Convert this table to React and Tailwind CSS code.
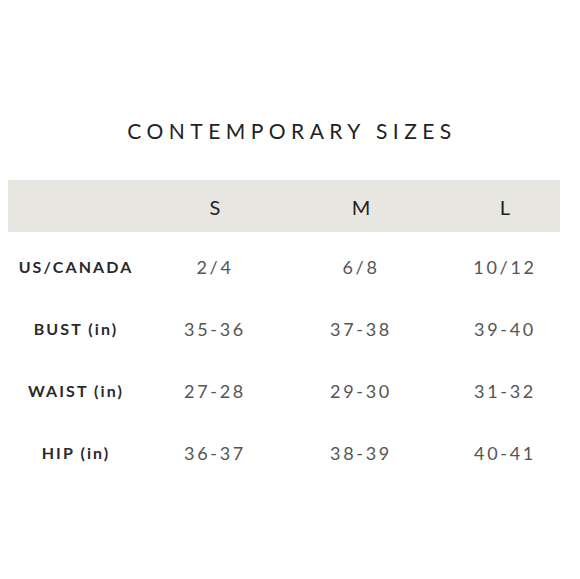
const sizes = ["S", "M", "L"];

const rows = [
  { label: "US/CANADA", values: ["2/4", "6/8", "10/12"] },
  { label: "BUST (in)", values: ["35-36", "37-38", "39-40"] },
  { label: "WAIST (in)", values: ["27-28", "29-30", "31-32"] },
  { label: "HIP (in)", values: ["36-37", "38-39", "40-41"] },
];

const colW = ["w-[146px]", "w-[146px]", "w-[142px]"];

export default function App() {
  return (
    <div
      className="w-[580px] h-[579px] bg-white overflow-hidden"
      style={{ fontFamily: "Lato, 'Open Sans', sans-serif" }}
    >
      <div className="pt-[117px] h-[145px] text-center text-[21px] leading-[28px] tracking-[0.26em] text-[#222] pl-[4px]">
        CONTEMPORARY SIZES
      </div>

      <div className="mt-[35px] ml-[8px] w-[552px] h-[52px] bg-[#e8e6e1] flex items-center">
        <div className="w-[134px] shrink-0" />
        {sizes.map((s, i) => (
          <div
            key={s}
            className={`${colW[i]} shrink-0 text-center text-[20px] text-[#222] pt-[2px]`}
          >
            {s}
          </div>
        ))}
      </div>

      <div className="mt-[4px] ml-[8px]">
        {rows.map((r) => (
          <div key={r.label} className="flex items-center h-[62px]">
            <div className="w-[134px] shrink-0 text-center text-[16px] font-bold tracking-[0.13em] text-[#2a2a2a] pl-[2px]">
              {r.label}
            </div>
            {r.values.map((v, i) => (
              <div
                key={v}
                className={`${colW[i]} shrink-0 text-center text-[18px] tracking-[0.15em] text-[#555]`}
              >
                {v}
              </div>
            ))}
          </div>
        ))}
      </div>
    </div>
  );
}
